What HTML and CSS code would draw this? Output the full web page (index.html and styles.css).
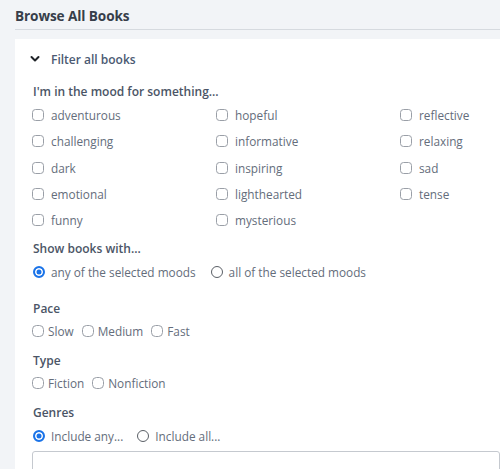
FILE: index.html
```html
<!DOCTYPE html>
<html>
<head>
<meta charset="utf-8">
<link rel="stylesheet" href="styles.css">
</head>
<body>
<div class="page">
  <h1 class="title">Browse All Books</h1>
  <div class="card">
    <div class="summary">
      <svg class="chev" viewBox="0 0 10 8" width="10" height="8"><path d="M1.5 2 L5 5.5 L8.5 2" fill="none" stroke="#1f2328" stroke-width="2" stroke-linecap="round" stroke-linejoin="round"/></svg>
      <span>Filter all books</span>
    </div>

    <div class="heading mood-h">I'm in the mood for something...</div>
    <div class="moods">
      <label class="opt"><span class="cb"></span>adventurous</label>
      <label class="opt"><span class="cb"></span>hopeful</label>
      <label class="opt"><span class="cb"></span>reflective</label>
      <label class="opt"><span class="cb"></span>challenging</label>
      <label class="opt"><span class="cb"></span>informative</label>
      <label class="opt"><span class="cb"></span>relaxing</label>
      <label class="opt"><span class="cb"></span>dark</label>
      <label class="opt"><span class="cb"></span>inspiring</label>
      <label class="opt"><span class="cb"></span>sad</label>
      <label class="opt"><span class="cb"></span>emotional</label>
      <label class="opt"><span class="cb"></span>lighthearted</label>
      <label class="opt"><span class="cb"></span>tense</label>
      <label class="opt"><span class="cb"></span>funny</label>
      <label class="opt"><span class="cb"></span>mysterious</label>
    </div>

    <div class="heading show-h">Show books with...</div>
    <div class="radios">
      <label class="ropt"><span class="rb on"></span>any of the selected moods</label>
      <label class="ropt"><span class="rb"></span>all of the selected moods</label>
    </div>

    <div class="heading pace-h">Pace</div>
    <div class="inline">
      <label class="iopt"><span class="cb round"></span>Slow</label>
      <label class="iopt"><span class="cb round"></span>Medium</label>
      <label class="iopt"><span class="cb round"></span>Fast</label>
    </div>

    <div class="heading type-h">Type</div>
    <div class="inline">
      <label class="iopt"><span class="cb round"></span>Fiction</label>
      <label class="iopt"><span class="cb round"></span>Nonfiction</label>
    </div>

    <div class="heading genre-h">Genres</div>
    <div class="radios genre-r">
      <label class="ropt"><span class="rb on"></span>Include any...</label>
      <label class="ropt"><span class="rb"></span>Include all...</label>
    </div>
    <div class="input"></div>
  </div>
</div>
</body>
</html>
```

FILE: styles.css
```css
* { box-sizing: border-box; }
html, body {
  margin: 0;
  padding: 0;
  background: #f2f4f7;
  overflow: hidden;
}
body {
  font-family: "Open Sans", "Noto Sans", sans-serif;
  width: 500px;
  height: 469px;
}
.page {
  padding-left: 15px;
  width: 500px;
}
.title {
  margin: 0;
  font-size: 13.6px;
  font-weight: 700;
  color: #373e4a;
  line-height: 20px;
  padding-top: 6px;
  height: 30px;
  border-bottom: 1px solid #d6dadf;
  letter-spacing: -0.1px;
}
.card {
  margin-top: 9px;
  background: #ffffff;
  padding: 12px 0 0 18px;
  height: 440px;
  overflow: hidden;
}
.summary {
  display: flex;
  align-items: center;
  height: 16px;
  margin-left: -3px;
  gap: 11px;
  font-size: 12px;
  font-weight: 600;
  color: #4b5a72;
}
.chev { display: block; }
.heading {
  font-size: 12px;
  font-weight: 600;
  color: #4b5566;
  line-height: 16px;
  height: 16px;
}
.mood-h { margin-top: 17px; }
.moods {
  margin-top: 2px;
  display: grid;
  grid-template-columns: 184px 184px 1fr;
  grid-auto-rows: 26.3px;
}
.opt, .ropt, .iopt {
  display: flex;
  align-items: center;
  font-size: 11.8px;
  color: #646d7b;
  white-space: nowrap;
}
.opt { gap: 7px; margin-left: -1px; }
.cb {
  display: inline-block;
  width: 12px;
  height: 12px;
  border: 1px solid #9a9fa7;
  border-radius: 3.5px;
  background: #fff;
  flex: none;
}
.cb.round { border-radius: 4.5px; }
.show-h { margin-top: 8px; }
.radios {
  margin-top: 2px;
  display: flex;
  height: 26px;
  align-items: center;
  gap: 15px;
}
.ropt { gap: 6px; }
.rb {
  display: inline-block;
  width: 12px;
  height: 12px;
  border-radius: 50%;
  border: 1.5px solid #5a5f66;
  background: #fff;
  flex: none;
}
.rb.on {
  border: 2px solid #1a73e8;
  background: #1a73e8;
  box-shadow: inset 0 0 0 1.5px #fff;
}
.pace-h { margin-top: 16px; }
.inline {
  margin-top: 2px;
  display: flex;
  height: 24px;
  align-items: center;
  gap: 8px;
  margin-left: -1px;
}
.iopt { gap: 4px; }
.type-h { margin-top: 10px; }
.genre-h { margin-top: 10px; }
.genre-r { gap: 14px; }
.input {
  margin-top: 2px;
  margin-left: -1px;
  height: 40px;
  border: 1px solid #c5c9cf;
  border-radius: 3px;
  background: #fff;
}
```
